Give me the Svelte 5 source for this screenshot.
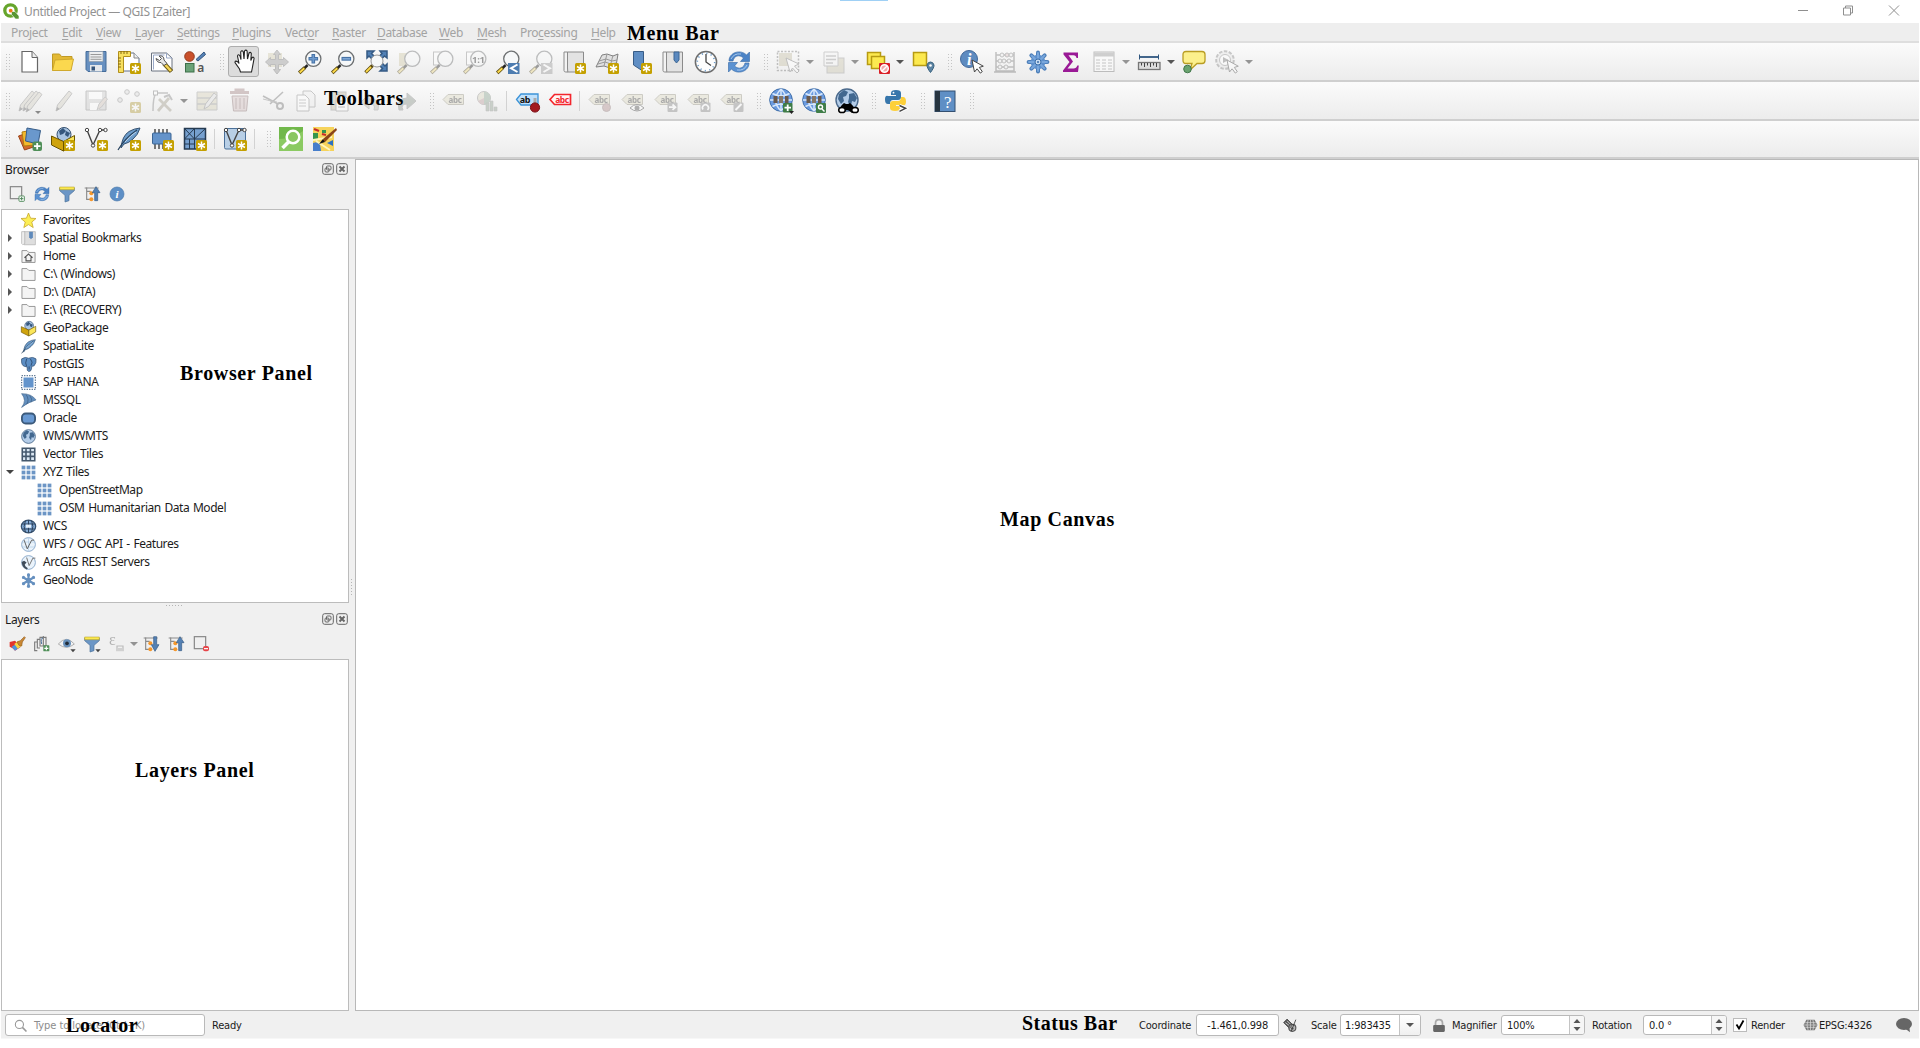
<script>
  // Shared artwork fragments, drawn on a 24x24 grid
  const badge = '<rect x="13" y="13" width="11" height="11" rx="1.500" fill="#c4a000"/><path d="M18.500 14.500v8M15 16.500l7 4M22 16.500l-7 4" stroke="#fff" stroke-width="1.500"/>';
  const stick = '<path d="M9.500 15.200l-3 3" stroke="#222" stroke-width="2.600"/><path d="M7 17.500l-5.800 5.300" stroke="#5a4a10" stroke-width="3.600"/><path d="M6.300 18.200l-4.600 4.200" stroke="#fcd94a" stroke-width="2"/>';
  const lens = stick + '<circle cx="15.300" cy="8.800" r="7.600" fill="#f6f8f9" stroke="#6d7072" stroke-width="1.300"/>';
  const cursor = '<path d="M12 10l2.500 12 2.600-3.200 3.200 4.300 2-1.500-3-4.200 4-1.200z" fill="#fff" stroke="#444" stroke-width="1"/>';
  const tag = '<path d="M1 10.500L6 5.500h15.500v10H6z" fill="#e0d9b4" stroke="#9a9478"/><text x="13" y="13.500" font-size="8" font-weight="700" text-anchor="middle" fill="#444">abc</text>';
  const greyBox = '<rect x="13.500" y="13.500" width="10" height="9.500" rx="1" fill="#888"/>';
  const globe = '<circle cx="12" cy="11" r="11.300" fill="#6b9be0" stroke="#3f6ea8"/><path d="M12 0v22M1 11h22M3.500 4.500q8.500 5 17 0M3.500 17.500q8.500-5 17 0M12 0q-11 11 0 22M12 0q11 11 0 22" fill="none" stroke="#d7e7fa" stroke-width="1.500"/><rect x="4.500" y="7" width="4" height="7" fill="#68594c"/><rect x="10" y="7" width="4" height="7" fill="#857768"/><rect x="16" y="7" width="3.500" height="7" fill="#68594c"/>';
  const earth = '<circle cx="12" cy="12" r="11" fill="#b3cce8" stroke="#4b6a8c" stroke-width="1.400"/><path d="M4 6l5-4 4 2-2 4-3 1 1 4-3 3-3-5zM14 6l5-1 3 5-2 4-3-1-1 5-3-4 1-4z" fill="#426890"/>';
  const pencil = '<path d="M5 22l1.500-6L18 2l3 2.500L10 19z" fill="#d5d0bd" stroke="#8c8c8c"/><path d="M5 22l1.200-4 2.500 2z" fill="#666"/>';
  const refresh = '<path d="M2 11C2 2 14-1 19.500 5L22.500 2v9.500h-9L16.500 8C12 4 7 6 6 11z" fill="#4b83c6" stroke="#3267a5" stroke-width=".6"/><path d="M22 13c0 9-12 12-17.500 6L1.500 22v-9.500h9L7.500 16c4.500 4 9.500 2 10.500-3z" fill="#5b92d2" stroke="#3267a5" stroke-width=".6"/><path d="M4 9Q7 3 14 4M20 15q-3 6-10 5" fill="none" stroke="#a8c8ec"/>';
  const book = '<path d="M5.500 2h16v20h-16z" fill="#e3e3e3" stroke="#8b8b8b"/><path d="M5.500 18V2H2v18.500q0 1.500 1.800 1.500h2z" fill="#f3f3f3" stroke="#8b8b8b"/>';
  const v = '<path d="M3 3l6 15L16 3h5" fill="none" stroke="#444" stroke-width="1.400"/><circle cx="3" cy="3" r="1.700" fill="#fff" stroke="#444"/><circle cx="16" cy="3" r="1.700" fill="#fff" stroke="#444"/><circle cx="21.500" cy="3" r="1.700" fill="#fff" stroke="#444"/><circle cx="9" cy="18.500" r="1.700" fill="#fff" stroke="#444"/>';
  const feather = '<path d="M4 21Q5 9 12 4.500 17 1.500 23 1 21 8 16 12 12 16 7 17z" fill="#6c9ccb" stroke="#33506f"/><path d="M1 23Q8 11 20 3" fill="none" stroke="#27425e" stroke-width="1.200"/><path d="M8 15q6-7 11-10" stroke="#bdd6ee" fill="none"/>';
  const box = '<circle cx="13" cy="7.500" r="7" fill="#a9c4e2" stroke="#35506e"/><path d="M8 4l4-3 3 3-3 3-3 1zM15 4l4 2-2 4-3-2z" fill="#35577e"/><path d="M.5 9l12 5.500v9.500L.5 18z" fill="#cfa30c" stroke="#6b5400"/><path d="M12.500 14.500L23.500 8.500v9L12.500 24z" fill="#fbe65a" stroke="#6b5400"/>';
  const funnel = '<path d="M1 3h22v4l-8 7v8l-6 2V14L1 7z" fill="#6b96c6" stroke="#4a6f99"/><path d="M1 1.500h22v4H1z" fill="#fce94f" stroke="#b39b20" stroke-width=".8"/>';
  const tree = '<path d="M4 2v18h6M4 8h6M1 3h21" fill="none" stroke="#8a8a8a" stroke-width="1.700"/><circle cx="11" cy="11" r="3" fill="#f5972b"/><circle cx="11" cy="20" r="3" fill="#f5972b"/>';
  const xyz = [1, 9, 17].flatMap((y) => [1, 9, 17].map((x) => `<rect x="${x}" y="${y}" width="6" height="6" fill="#6c95c5"/>`)).join('');
  const gear = Array.from({ length: 8 }, (_, i) => `<path d="M12 12V2.600" transform="rotate(${i * 45} 12 12)" stroke="#4d7fb9" stroke-width="4" stroke-linecap="round"/>`).join('')
    + '<circle cx="12" cy="12" r="7.300" fill="#5e90cc"/>'
    + Array.from({ length: 8 }, (_, i) => `<path d="M12 8V3" transform="rotate(${i * 45} 12 12)" stroke="#79a7dc" stroke-width="2" stroke-linecap="round"/>`).join('')
    + '<circle cx="12" cy="12" r="3" fill="#c8dcf2" stroke="#3b6ea8"/><circle cx="12" cy="12" r="1" fill="#3b6ea8"/>';
  const folder = '<path d="M1.500 21.500v-19h8l3 3h10v16z" fill="#f4f4f4" stroke="#939393" stroke-width="1.500"/>';
  const info = '<circle cx="12" cy="12" r="10.500" fill="#5d8fc6" stroke="#4a78ab"/><text x="12" y="18" font-size="17" font-style="italic" font-weight="700" text-anchor="middle" fill="#fff" font-family="Liberation Serif, serif">i</text>';
  const arrowDown = '<path d="M17 20h8l-4 4.500z" fill="#444"/>';

  const icons = {
    new: '<path d="M4 1.500h10l5.500 6V22H4z" fill="#fff" stroke="#666" stroke-width="1.200"/><path d="M14 1.500v6h5.500" fill="#eee" stroke="#666"/>',
    open: '<path d="M1.500 20.500V4h7l2 2.500H21V12" fill="#e3b935" stroke="#c09a25"/><path d="M1.500 20.500L4 10l18.500-1-2.500 11.500z" fill="#fbd84e" stroke="#d0a92d"/>',
    save: '<path d="M2 1.500h20v20H4l-2-2z" fill="#6790c0" stroke="#456c99"/><path d="M5 1.500h14v10H5z" fill="#eceeef" stroke="#8f9ba8" stroke-width=".7"/><path d="M6.500 4.500h11M6.500 7h11M6.500 9.300h11" stroke="#999"/><rect x="6" y="15" width="12" height="6.500" fill="#e5e8eb"/><rect x="7.500" y="16.500" width="3.500" height="4" fill="#34547a"/>',
    layout: '<path d="M5 3h12l5 5v13H5z" fill="#fff" stroke="#5e6f88"/><path d="M17 3v5h5" fill="#eee" stroke="#888"/><path d="M1.500 1.500h12v5h-7v16h-5z" fill="#f7df5f" stroke="#b18f1b"/><path d="M4 1v3M7 1v3M10 1v3M1 8h3M1 11h3M1 14h3M1 17h3" stroke="#866a12"/>' + badge,
    manager: '<path d="M1.500 3h15l5.500 5v13H1.500z" fill="#fff" stroke="#6a7380"/><path d="M16.500 3v5H22M3.500 19.500V5h11" fill="none" stroke="#9aa9c8"/><path d="M14 13.500l7.500 8" stroke="#6d5a16" stroke-width="4.500"/><path d="M15 14.500l6 6.500" stroke="#f5d555" stroke-width="2.500"/><path d="M9 6q5-1 5 4l3 3.500-3 2-3-3q-4 .5-5-4l3.500 2 2-2z" fill="#e8e8e8" stroke="#555"/>',
    style: '<circle cx="6.500" cy="6.500" r="4.800" fill="#c9502b" stroke="#93391d"/><path d="M13 9.500l8-7.500 1.500 2.500L15 11z" fill="#5682b6" stroke="#34567f"/><rect x="2.500" y="13.500" width="8.500" height="8.500" fill="#6aa278" stroke="#3c7049"/><text x="17.500" y="21.500" font-size="12" font-weight="600" text-anchor="middle" fill="#555">a</text>',
    hand: '<path d="M8.500 22l-1-3L3 12.500q0-2.500 3-.5l1 1.500L5.500 6q.5-2.500 2.500 0l1 3.500L8.700 2q1.300-2.400 2.600 0l.7 7 .5-8q1.500-1.700 2.600 0l.4 8 1.500-6q1.500-1.500 2.300.5l-.5 7 1.300-3q1.500-1 2 .8L20.500 17l-1 5z" fill="#fff" stroke="#222" stroke-width="1.100"/>',
    pansel: '<rect x="3" y="3" width="14" height="14" fill="#d8ce9c"/><path d="M12 0l3.500 4.500h-2v5h5v-2L23.500 12l-5 4.500v-2h-5v5h2L12 24l-3.500-4.500h2v-5h-5v2L.5 12l5-4.500v2h5v-5h-2z" fill="#999" stroke="#777"/>',
    zin: lens + '<path d="M15.300 4v9.600M10.500 8.800h9.600" stroke="#4773a6" stroke-width="3.600"/><path d="M15.300 5v7.600M11.500 8.800h7.600" stroke="#6f9bce" stroke-width="1.600"/>',
    zout: lens + '<path d="M10.500 8.800h9.600" stroke="#4773a6" stroke-width="3.800"/><path d="M11.500 8.800h7.600" stroke="#7ea7d5" stroke-width="1.600"/>',
    zfull: '<path d="M3 1h7L7.500 3.500l4 4-2.500 2.500-4-4L3 8zM23 1v7l-2.500-2-4 4L14 7.500l4-4L16 1zM23 21h-7l2.500-2.500-4-4L17 12l4 4 2-2z" fill="#5180b5" stroke="#355a84" stroke-width="1.500"/><circle cx="13" cy="11" r="6" fill="#f6f8f9" stroke="#999"/><path d="M8.500 15.500L1.500 22.500" stroke="#5a4a10" stroke-width="3.400"/><path d="M7 17l-5 5" stroke="#fcd94a" stroke-width="1.800"/>',
    zsel: '<rect x="2" y="3" width="13" height="13" fill="#d5ca92"/>' + lens,
    zlayer: '<rect x="3.500" y="2" width="14" height="13" fill="#fff" stroke="#888"/>' + lens,
    znative: '<rect x="3.500" y="2" width="14" height="13" fill="#fff" stroke="#888"/>' + lens + '<text x="15.300" y="12.500" font-size="9.500" font-weight="700" text-anchor="middle" fill="#222">1:1</text>',
    zlast: lens + '<rect x="12" y="13" width="11.500" height="11" fill="#4d7cb0"/><path d="M21.500 14.500L15 18.300l6.500 3.700" fill="none" stroke="#fff" stroke-width="2"/>',
    znext: lens + '<rect x="12" y="13" width="11.500" height="11" fill="#999"/><path d="M14.500 14.500l6.500 3.800-6.500 3.700" fill="none" stroke="#fff" stroke-width="2"/>',
    mapview: book + badge,
    view3d: '<path d="M1 17L7 5l5-1 6 2 5-2-2 12-6 2-6-2z" fill="#e0e0e0" stroke="#808080"/><path d="M4 11l7-2 6 2 5-1M9 16l3-12M15 17l3-12M3 14l7-2 6 2 5-1" fill="none" stroke="#999"/>' + badge,
    bookmark: '<path d="M5.500 1.500h10v20L5.500 15z" fill="#5f8ec4" stroke="#385c86"/>' + badge,
    bookmarks: book + '<path d="M13 2h5v8l-2.500 3L13 10z" fill="#5b89bf" stroke="#3c6795"/>',
    clock: '<circle cx="12" cy="12" r="10.600" fill="#fdfdfd" stroke="#6d6d6d" stroke-width="1.500"/><circle cx="12" cy="12" r="8.700" fill="none" stroke="#6d9bc8" stroke-width="1.600" stroke-dasharray="1.200 3.355"/><path d="M12 4v8l5 3.500" fill="none" stroke="#444" stroke-width="1.300"/>',
    refresh,
    select: '<path d="M1.500 1.500h21v19h-21z" fill="none" stroke="#777" stroke-width="1.500" stroke-dasharray="2 1.500"/><rect x="3" y="3" width="13" height="13" fill="#c9bf96"/><path d="M10 8l4 14 2.500-4 4.500 5 2-2-4.500-5 4.500-2z" fill="#fff" stroke="#777"/>',
    selform: '<rect x="6" y="8" width="17" height="15" fill="#d0c7a2" stroke="#999"/><path d="M3 2h14v14H3z" fill="#f5f5f5" stroke="#999"/><path d="M5 6h10M5 9.500h10M5 13h7" stroke="#999" stroke-width="1.500"/>',
    deselect: '<rect x="1.500" y="2.500" width="13" height="12" fill="#fce94f" stroke="#b79b12" stroke-width="1.500"/><rect x="5.500" y="6.500" width="13" height="12" fill="#fce94f" stroke="#b79b12" stroke-width="1.500"/><rect x="13" y="13" width="11" height="11" rx="1" fill="#da2027"/><circle cx="18.500" cy="18.500" r="3.800" fill="#f3a9a9" stroke="#fff" stroke-width="1.500"/><path d="M16 21l5-5" stroke="#fff" stroke-width="1.500"/>',
    selloc: '<rect x="2.500" y="2.500" width="13" height="13" fill="#fce94f" stroke="#b79b12" stroke-width="1.500"/><path d="M19.500 22.500q-3.800-5-3.500-7.500.8-3 3.500-3t3.500 3q.3 2.500-3.500 7.500z" fill="#5b84a3" stroke="#39627f"/><circle cx="19.500" cy="15.500" r="1.300" fill="#fff"/>',
    identify: '<circle cx="9" cy="9" r="8.500" fill="#5d8bc0" stroke="#42699a"/><text x="9" y="14.500" font-size="16" font-style="italic" font-weight="700" text-anchor="middle" fill="#fff" font-family="Liberation Serif, serif">i</text>' + cursor,
    abacus: '<path d="M3 2v19h18V2M3 5h18M3 11h18M3 17h18M1 22h22" fill="none" stroke="#777" stroke-width="1.500"/><g fill="#eee" stroke="#777"><circle cx="9" cy="5" r="2"/><circle cx="14" cy="5" r="2" fill="#e7bcbc"/><circle cx="18" cy="5" r="2"/><circle cx="7" cy="11" r="2"/><circle cx="11" cy="11" r="2"/><circle cx="16" cy="11" r="2"/><circle cx="7" cy="17" r="2"/><circle cx="13" cy="17" r="2"/></g>',
    gear,
    sigma: '<path d="M4.500 2.500h14.500V8h-1.500q-.5-2.800-3-2.800H9.500L14 11.500 8.500 18.500h6q3 0 3.800-3h1.500L19 22H4v-1.500l6.500-8.500L4.500 4.500z" fill="#9a1a96"/>',
    table: '<rect x="2" y="2" width="20" height="19.500" fill="#fff" stroke="#777"/><path d="M2 4.500h20" stroke="#999" stroke-width="4"/><path d="M4 10h4M4 13h4M4 16h4M4 19h4M10 10h4M10 13h4M10 16h4M10 19h4M16 10h4M16 13h4M16 16h4M16 19h4" stroke="#888" stroke-width="1.200"/>',
    ruler: '<path d="M2.500 7h19" stroke="#2f567f" stroke-width="1.800"/><path d="M2.500 4.500v5M21.500 4.500v5" stroke="#2f567f"/><rect x="1.500" y="12.500" width="21.500" height="7" fill="#ddd" stroke="#777" stroke-width="1.300"/><path d="M4.500 13v2.500M7.500 13v4M10.500 13v2.500M13.500 13v4M16.500 13v2.500M19.500 13v4" stroke="#444"/>',
    tips: '<path d="M4 1.500h16q3 0 3 3v6q0 3-3 3h-5L8 20l2-6.500H4q-3 0-3-3v-6q0-3 3-3z" fill="#fcf08c" stroke="#b99d24" stroke-width="1.300"/><circle cx="5.500" cy="19" r="3.800" fill="#69a36f" stroke="#41764a"/>',
    action: '<circle cx="10" cy="10" r="8.800" fill="#e5e5e5" stroke="#888" stroke-width="2" stroke-dasharray="3.500 1.500"/><circle cx="10" cy="10" r="5.500" fill="#fff" stroke="#888"/><path d="M8 7l5.500 3L8 13z" fill="#777"/>' + cursor,

    edits: '<g transform="translate(-4 0)">' + pencil + '</g>' + pencil + '<g transform="translate(3 1)">' + pencil + '</g><path d="M17 22h6l-3 3z" fill="#000"/>',
    pencil,
    saveedit: '<path d="M2 2h20v19H2z" fill="#ccc" stroke="#888"/><rect x="5" y="3" width="13" height="7" fill="#fff"/><rect x="6" y="14" width="9" height="7" fill="#fff"/><path d="M13 21l2-6 6-7 2.500 2-6 8z" fill="#d9c4b4" stroke="#999"/>',
    points: '<g fill="#ddd" stroke="#888"><circle cx="3" cy="11" r="2.300"/><circle cx="10" cy="3" r="2.300"/><circle cx="20" cy="5" r="2.300"/></g>' + badge,
    vertex: '<path d="M3 22Q3 8 6 4h12" fill="none" stroke="#888" stroke-width="1.500"/><rect x="3.500" y="2" width="4" height="4" fill="#fff" stroke="#777"/><path d="M8 22L19 9M9 10l12 12" stroke="#a69e83" stroke-width="2.800"/><path d="M14 8l5-2 3 5" fill="none" stroke="#888" stroke-width="2"/>',
    attrs: '<path d="M2 3h20v6H2zM2 9h20v6H2zM2 15h20v6H2z" fill="#d8d1a8" stroke="#999"/><path d="M9 20l1.500-5L19 4l3 2.500-8.500 11z" fill="#ddd" stroke="#888"/>',
    trash: '<path d="M2 3.500h19M8 3V1h7v2" stroke="#b28080" stroke-width="3" fill="none"/><path d="M4 7h16l-1.500 15h-13z" fill="#ddbcbc" stroke="#997070"/><path d="M8 9v11M12 9v11M16 9v11" stroke="#997070"/>',
    cut: '<path d="M2 7l15 8M22 3L9 15" stroke="#777" stroke-width="1.600"/><circle cx="19" cy="17" r="3" fill="none" stroke="#777" stroke-width="2"/><path d="M9 12l7 1M2 10l12 3" stroke="#888" fill="none"/>',
    copy: '<path d="M9 2h8l4 4v12H9z" fill="#eee" stroke="#888"/><path d="M3 6h8l4 4v12H3z" fill="#fff" stroke="#888"/><path d="M5 11h7M5 14h7M5 17h7" stroke="#999"/>',
    paste: '<rect x="4" y="3" width="15" height="18" fill="#cbbb8c" stroke="#888"/><path d="M9 6h8l4 4v12H9z" fill="#fff" stroke="#888"/><path d="M11 12h7M11 15h7M11 18h7" stroke="#777"/>',
    undo: '<path d="M18 21q3-12-9-11V5l-8 8 8 7v-5q7-1 5 6z" fill="#bba" stroke="#999"/>',
    redo: '<path d="M6 21Q3 9 14 9V4l9 8-9 8v-5q-7 0-4 6z" fill="#898" stroke="#888"/>',
    label: tag,
    diagram: '<circle cx="9" cy="9" r="6.500" fill="#ddd5b0" stroke="#888"/><path d="M9 9V2.500A6.500 6.500 0 019 15.500z" fill="#7fa987"/><path d="M9 9L3 12a6.500 6.500 0 006 3.500z" fill="#c99"/><path d="M11 14h3v8h-3zM15 12h3v10h-3zM19 18h3v4h-3z" fill="#8aa58a" stroke="#888" stroke-width=".6"/>',
    abpin: '<path d="M1.500 10.500L6 5h17v11H6z" fill="#bfe0fb" stroke="#3c93d8" stroke-width="1.300"/><text x="10" y="14" font-size="9" font-weight="700" text-anchor="middle" fill="#111">ab</text><path d="M20 17V9" stroke="#aaa" stroke-width="3"/><circle cx="20" cy="18.500" r="4.600" fill="#a31a20" stroke="#7c1016"/>',
    abcred: '<path d="M2 10.500L6.500 5.500h16v10h-16z" fill="#fff5f5" stroke="#f3262d" stroke-width="1.700"/><text x="14" y="13.500" font-size="8.500" font-weight="700" text-anchor="middle" fill="#f3262d">abc</text>',
    labpin: tag + '<circle cx="18.500" cy="18.500" r="4" fill="#c58b8b" stroke="#977"/>',
    labeye: tag + '<path d="M9 19q7-7 14 0-7 6-14 0z" fill="#fff" stroke="#444"/><circle cx="16" cy="19" r="2.500" fill="#555"/>',
    labmove: tag + greyBox + '<path d="M15 18.200h6M18.500 15.500l3 2.700-3 2.700" stroke="#fff" stroke-width="1.700" fill="none"/>',
    labrot: tag + greyBox + '<path d="M16 20.500a3 3 0 114.500.500" stroke="#fff" stroke-width="1.600" fill="none"/>',
    labedit: tag + greyBox + '<path d="M15.500 21l6-6" stroke="#fff" stroke-width="2"/>',
    webadd: globe + '<rect x="14" y="14" width="9.500" height="9.500" rx="1" fill="#3f7d48"/><path d="M18.700 15.500v6.500M15.500 18.700H22" stroke="#fff" stroke-width="1.800"/><path d="M20 22h5l-2.500 3z" fill="#222"/>',
    websearch: globe + '<rect x="14" y="14" width="10" height="10" rx="1" fill="#3f7d48"/><circle cx="18.500" cy="18" r="2" fill="none" stroke="#fff" stroke-width="1.400"/><path d="M20 20l2.500 2.500" stroke="#fff" stroke-width="1.400"/>',
    binoc: '<g transform="translate(0 -1)">' + earth + '</g><path d="M4 23q0-5 5-9l2 1h2l2-1q5 4 6 9l-4 1-4-3h-3l-3 3z" fill="#000"/><ellipse cx="7" cy="21" rx="3.300" ry="2.600" fill="#fff" stroke="#000" stroke-width="1.500"/><ellipse cx="20" cy="21" rx="3.300" ry="2.600" fill="#fff" stroke="#000" stroke-width="1.500"/>',
    python: '<path d="M7 7V4q0-3 5-3t5 3v4q0 3-3 3H9q-3 0-3 4H4q-3 0-3-4.500T4 7h8V6H7z" fill="#3776ab"/><path d="M16 16v3q0 3-5 3t-5-3v-4q0-3 3-3h5q3 0 3-4h2q3 0 3 4.500T19 16h-7v1h4z" fill="#fdd03a"/><circle cx="9.500" cy="3.700" r=".9" fill="#fff"/><path d="M15.500 16.500l6 2.800-6 3" stroke="#fff" stroke-width="3.500" fill="none"/><path d="M15.500 16.500l6 2.800-6 3" stroke="#444" stroke-width="1.500" fill="none"/>',
    help: '<rect x="2" y="2" width="20" height="20.500" fill="#5f8fc5" stroke="#334f70"/><path d="M2 2h5v20.500H2z" fill="#263440"/><text x="14.500" y="18.500" font-size="17" text-anchor="middle" fill="#fff" font-family="Liberation Serif, serif">?</text>',

    sources: '<path d="M.5 9l9-3 6 14-9 3z" fill="#d3682d" stroke="#9a4317"/><path d="M4 5l11-2 2 15-11 1z" fill="#f4b92c" stroke="#b17d12"/><path d="M9 1l13.500 2.500L20 17 7.500 14z" fill="#6a98cc" stroke="#365c88"/><rect x="14.500" y="14.500" width="9.500" height="9.500" rx="2" fill="#4f8f58"/><path d="M19.200 16v6.500M16 19.200h6.500" stroke="#fff" stroke-width="1.800"/>',
    gpkg: box + badge,
    shp: v + badge,
    spatialite: feather + badge,
    memory: '<path d="M5 2v20M9 2v20M13 2v20M17 2v20" stroke="#333" stroke-width="1.300"/><rect x="2.500" y="6" width="18.500" height="11" rx="1" fill="#6493ca" stroke="#3b6594"/>' + badge,
    mesh: '<rect x="1.500" y="1.500" width="21" height="20.500" fill="#76a0cf" stroke="#263b52" stroke-width="1.500"/><path d="M11.500 1.500V22M1.500 12h21M1.500 1.500l10 10.500M11.500 1.500l-10 10.500M11.500 12l11-10.500M1.500 17h10M6.500 12v10" stroke="#263b52"/>' + badge,
    virtual: '<rect x="1.500" y="1.500" width="21" height="20.500" rx="1.500" fill="#b8cfe6" stroke="#4b7099"/>' + v + badge,
    search: '<rect x="0" y="0" width="24" height="24" fill="#71b84b"/><path d="M0 24V12q14 0 24-8v20z" fill="#8bca62"/><circle cx="14" cy="10" r="6.300" fill="#8ac762" stroke="#fff" stroke-width="2.500"/><path d="M9.500 15L3.500 21" stroke="#fff" stroke-width="3.500"/>',
    osm: '<rect x="1" y="0" width="21" height="24" fill="#f6d35b"/><path d="M1 6h5v6H1zM10 3h4v3h-4z" fill="#35954c"/><path d="M1 16q6-2 7 2t1 6H1z" fill="#477ecb"/><path d="M15 16l6-3v6z" fill="#2c71c3"/><path d="M2 2l5 2M10 7l4 1" stroke="#c42b2b" stroke-width="2.200"/><path d="M4 14l14 9M1 13L20 10" stroke="#fff6bb" stroke-width="2"/><path d="M24 1L11 12l2 3L25 3z" fill="#8b4519"/><path d="M11 12l-4 5 6-2z" fill="#111"/>',

    addsel: '<rect x="2" y="1" width="17" height="18" fill="none" stroke="#888" stroke-width="1.800"/><rect x="15" y="15" width="8" height="8" rx="1" fill="#fff" stroke="#4d8958" stroke-width="1.400"/><path d="M19 16.500v5M16.500 19h5" stroke="#4d8958" stroke-width="1.500"/>',
    funnel,
    funneldrop: funnel + arrowDown,
    collapse: tree + '<path d="M16 22V10h-3.500L18 1l6 9h-3.500v12z" fill="#5481b4" stroke="#355a85"/>',
    expand: tree + '<path d="M16 1v12h-3.500l5.500 10 6-10h-3.500V1z" fill="#5481b4" stroke="#355a85"/>',
    info,
    brush: '<path d="M1 9l8-2 9 9-9 6q-2-4-8-6z" fill="#e2352d"/><path d="M4 16l10-6 4 5-9 7z" fill="#4d94df"/><path d="M8 12l6-5 6 7-7 5z" fill="#f7d342"/><path d="M12 9l5-2 6-6 1.500 1.500L20 9l-1 6-4-1z" fill="#c98733" stroke="#966023"/>',
    group: '<path d="M5 22H1V9h4M9 18H5V5h4M9 2h9v13H9zM14 0v15" fill="none" stroke="#7c7c7c" stroke-width="1.700"/><path d="M13.500 3q-4 0-2 9" fill="none" stroke="#4c739e" stroke-width="1.500"/><rect x="14" y="14" width="9" height="9" rx="1" fill="#4f8f58"/><path d="M18.500 15.500v6M15.500 18.500h6" stroke="#fff" stroke-width="1.700"/>',
    eye: '<path d="M-1 12Q11-2 23 12 11 22 -1 12z" fill="#f3f3f3" stroke="#a5a5a5" stroke-width="1.300"/><circle cx="12" cy="11" r="6" fill="#6790bb"/><circle cx="12" cy="11" r="2.800" fill="#222c38"/>' + arrowDown,
    epsilon: '<text x="0" y="14" font-size="24" fill="#888" font-family="Liberation Serif, serif">ε</text><path d="M12 23v-8h9v8M15 23v-5M18 23v-5" fill="none" stroke="#999" stroke-width="1.800"/>',
    remove: '<rect x="2" y="1" width="17" height="18" fill="none" stroke="#888" stroke-width="1.800"/><rect x="15" y="15" width="9" height="8" rx="3" fill="#e64549"/><path d="M16.500 19h6" stroke="#fff" stroke-width="1.800"/>',

    star: '<path d="M12 0l3.300 8.300 8.700.5-6.800 5.700 2.300 8.800L12 18.500l-7.500 4.800 2.300-8.800L0 8.800l8.700-.5z" fill="#fcee55" stroke="#c7a72b" stroke-width="1.300"/>',
    spatialbm: '<path d="M5 1h18v21H5z" fill="#dedede" stroke="#aaa"/><path d="M1 1h5v19l-3 2-2-2z" fill="#eee" stroke="#aaa"/><path d="M13 1h6v9l-3 3-3-3z" fill="#5f8abb"/>',
    home: folder + '<path d="M5.500 14L12 8l6.500 6M8 13v6h8v-6" fill="none" stroke="#555" stroke-width="1.700"/>',
    folder,
    box,
    feather,
    elephant: '<path d="M1 3Q7-1 12 2q7-3 12 1 1 6-3 11l-4 1v3q-1 6-5 5l-2-2v-5l-4-1Q0 14 1 3z" fill="#5c8ec4" stroke="#39587b" stroke-width="1.300"/><path d="M9 3q-3 7 0 12M15 3q5 5 1 11M13 15v5" fill="none" stroke="#2f4d70" stroke-width="1.500"/>',
    hana: '<rect x="4" y="4" width="16" height="16" fill="#6394cc"/><path d="M1 1h22v22H1z" fill="none" stroke="#54708e" stroke-width="2" stroke-dasharray="2 2"/>',
    mssql: '<path d="M1 1q16 0 23 10-5 2-10 4T1 23Q10 12 1 1z" fill="#638fbe" stroke="#41658b"/><path d="M8 2q6 9 1 16M14 4q5 6 2 11" fill="none" stroke="#37587d"/>',
    oracle: '<rect x="1.500" y="4" width="21" height="16" rx="6" fill="#6999d2" stroke="#3c5a7b" stroke-width="3"/>',
    earth,
    vtiles: '<path d="M2 2h20v20H2zM2 8h20M2 15h20M8 2v20M15 2v20" fill="#dbe8f4" stroke="#44586d" stroke-width="2.500"/>',
    xyz,
    wcs: '<ellipse cx="12" cy="12" rx="11.500" ry="10" fill="#83aad4" stroke="#35506e" stroke-width="2"/><path d="M12 2v20M2 8h20M2 16h20M7 3q-4 9 0 18M17 3q4 9 0 18" stroke="#2a3e57" stroke-width="1.500" fill="none"/><rect x="8" y="9" width="8" height="5" fill="#e6f1fb"/>',
    wfs: '<circle cx="12" cy="12" r="11" fill="#eaf3fb" stroke="#86a6c9" stroke-width="1.500"/><path d="M12 1v22M2 8h20M2 16h20" stroke="#abc7e3"/><path d="M5 5l5 14L17 5h4" stroke="#666" stroke-width="1.600" fill="none"/>',
    arcgis: '<circle cx="12" cy="12" r="11" fill="#eaf3fb" stroke="#86a6c9" stroke-width="1.500"/><path d="M9 4l4 13L19 5h4" stroke="#777" stroke-width="1.600" fill="none"/><path d="M1 11l4-2 4 3-3 3 1 3 4 3-2 2q-7-3-8-12z" fill="#404c59"/>',
    geonode: '<path d="M12 1v22M2.500 6.500l19 11M21.500 6.500l-19 11" stroke="#6690bf" stroke-width="3.500"/><circle cx="12" cy="12" r="4" fill="#6690bf"/><g fill="#6690bf"><circle cx="12" cy="3" r="2.500"/><circle cx="12" cy="21" r="2.500"/><circle cx="4" cy="7" r="2.500"/><circle cx="20" cy="17" r="2.500"/><circle cx="20" cy="7" r="2.500"/><circle cx="4" cy="17" r="2.500"/></g>',
    extents: '<path d="M1 7l6-6 9 9-6 6z" fill="#555" stroke="#222"/><path d="M4 7l9 7M7 4l8 8" stroke="#ddd" stroke-width="1.400"/><circle cx="16" cy="16" r="6" fill="#bbb" stroke="#555" stroke-width="2"/><path d="M11 17l6-7M14 22l8-20" stroke="#333" stroke-width="1.400"/><circle cx="16" cy="17" r="2" fill="#444"/>',
    lock: '<path d="M6 12V8q0-6 6-6t6 6v4" fill="none" stroke="#aaa" stroke-width="3"/><rect x="2" y="11" width="20" height="12" rx="2" fill="#666"/>',
    crs: '<path d="M5 3h14l5 9-5 9H5l-5-9z" fill="#777"/><path d="M12 3v18M0 12h24M3 8h18M3 16h18M8 3q-4 9 0 18M16 3q4 9 0 18" fill="none" stroke="#ddd" stroke-width="1.200"/>',
    bubble: '<ellipse cx="12" cy="10.500" rx="12" ry="9" fill="#666"/><path d="M13 17l8 6-1-8z" fill="#666"/>',
    loupe: '<circle cx="10" cy="10" r="7.500" fill="none" stroke="#999" stroke-width="2"/><path d="M15.500 15.500L23 23" stroke="#999" stroke-width="3"/>'
  };

  // Item syntax: "|" grip, "/" separator, "~name" disabled, "!name" pressed, "name>" with a drop arrow
  const toolbars = [
    '| new open save layout manager style | !hand ~pansel zin zout zfull ~zsel ~zlayer ~znative zlast ~znext mapview view3d bookmark bookmarks clock refresh | ~select> ~selform> deselect> selloc | identify ~abacus gear sigma ~table> ruler> tips ~action>',
    '| ~edits ~pencil ~saveedit ~points ~vertex> ~attrs ~trash ~cut ~copy ~paste ~undo ~redo | ~label ~diagram / abpin abcred / ~labpin ~labeye ~labmove ~labrot ~labedit | webadd websearch binoc | python | help |',
    '| sources gpkg shp spatialite memory mesh / virtual / | search osm'
  ].map((row) => row.split(' ').map((t) => ({
    kind: t === '|' ? 'grip' : t === '/' ? 'sep' : 'tool',
    off: t.startsWith('~'),
    on: t.startsWith('!'),
    drop: t.endsWith('>'),
    name: t.replace(/[~!>]/g, '')
  })));

  const menus = ['Pro_ject', '_Edit', '_View', '_Layer', '_Settings', '_Plugins', 'Vect_or', '_Raster', '_Database', '_Web', '_Mesh', 'Pro_cessing', '_Help']
    .map((m) => { const i = m.indexOf('_'); return [m.slice(0, i), m[i + 1], m.slice(i + 2)]; });

  const rows = [
    ['star', 'Favorites'], ['spatialbm', 'Spatial Bookmarks', 'shut'], ['home', 'Home', 'shut'],
    ['folder', 'C:\\ (Windows)', 'shut'], ['folder', 'D:\\ (DATA)', 'shut'], ['folder', 'E:\\ (RECOVERY)', 'shut'],
    ['box', 'GeoPackage'], ['feather', 'SpatiaLite'], ['elephant', 'PostGIS'], ['hana', 'SAP HANA'],
    ['mssql', 'MSSQL'], ['oracle', 'Oracle'], ['earth', 'WMS/WMTS'], ['vtiles', 'Vector Tiles'],
    ['xyz', 'XYZ Tiles', 'opened'], ['xyz', 'OpenStreetMap', 'child'], ['xyz', 'OSM Humanitarian Data Model', 'child'],
    ['wcs', 'WCS'], ['wfs', 'WFS / OGC API - Features'], ['arcgis', 'ArcGIS REST Servers'], ['geonode', 'GeoNode']
  ];
</script>

{#snippet icon(name, cls)}
  <svg class={cls} viewBox="0 0 24 24" fill="none">{@html icons[name]}</svg>
{/snippet}

{#snippet dockTitle(title)}
  <div class="dock-title">
    <span>{title}</span>
    <svg viewBox="0 0 12 12"><rect x=".7" y=".7" width="10.600" height="10.600" rx="2" /><rect x="4.500" y="3" width="4.500" height="4" rx="1" /><rect x="3" y="5" width="4" height="4" rx="1" /></svg>
    <svg viewBox="0 0 12 12"><rect x=".7" y=".7" width="10.600" height="10.600" rx="2" /><path d="M3.500 3.500l5 5M8.500 3.500l-5 5" stroke-width="2" /></svg>
  </div>
{/snippet}

{#snippet spin(value)}
  <div class="field spin">
    <span>{value}</span>
    <svg viewBox="0 0 14 20"><path d="M3.500 8h7L7 4zM3.500 12h7L7 16z" /></svg>
  </div>
{/snippet}

<div class="app">
  <header class="titlebar">
    <svg class="logo" viewBox="0 0 16 16"><circle cx="7.500" cy="7.500" r="5.700" fill="none" stroke="#66a52b" stroke-width="3.300" /><path d="M8.500 8.500h3.500l4 4.500v3h-3.500l-4-4.500z" fill="#589632" stroke="#fff" stroke-width=".6" /><circle cx="7.700" cy="7.700" r="1.900" fill="#ee7913" /></svg>
    <span class="caption">Untitled Project — QGIS [Zaiter]</span>
    <svg class="winbtns" viewBox="0 0 104 14"><path d="M2 7.500h10M47.500 5h7v7h-7zM49.500 5V3h7v7h-2M93 2.500l10 10M103 2.500l-10 10" /></svg>
    <i class="snap"></i>
  </header>

  <nav class="menubar">
    {#each menus as [a, key, b]}<span>{a}<u>{key}</u>{b}</span>{/each}
  </nav>

  {#each toolbars as bar}
    <div class="toolbar">
      {#each bar as item}
        {#if item.kind === 'grip'}
          <i class="grip"></i>
        {:else if item.kind === 'sep'}
          <i class="sep"></i>
        {:else}
          <div class="tool" class:on={item.on} class:off={item.off}>{@render icon(item.name, 'ico')}</div>
          {#if item.drop}<i class="drop" class:off={item.off}></i>{/if}
        {/if}
      {/each}
    </div>
  {/each}

  <main class="workspace">
    <aside class="docks">
      <section class="dock browser">
        {@render dockTitle('Browser')}
        <div class="dock-tools">
          {#each ['addsel', 'refresh', 'funnel', 'collapse', 'info'] as n}{@render icon(n, 'small')}{/each}
        </div>
        <div class="tree">
          {#each rows as [ic, text, state]}
            <div class="row {state ?? ''}"><i class="twist"></i>{@render icon(ic, 'node')}<span>{text}</span></div>
          {/each}
        </div>
      </section>
      <div class="splitter"><i></i></div>
      <section class="dock layers">
        {@render dockTitle('Layers')}
        <div class="dock-tools">
          {#each ['brush', 'group', 'eye', 'funneldrop', 'epsilon'] as n}{@render icon(n, n === 'epsilon' ? 'small dim' : 'small')}{/each}
          <i class="drop off"></i>
          {#each ['expand', 'collapse', 'remove'] as n}{@render icon(n, 'small')}{/each}
        </div>
        <div class="tree"></div>
      </section>
    </aside>
    <div class="vsplit"><i></i></div>
    <div class="canvas"></div>
  </main>

  <footer class="statusbar">
    <div class="field locator">{@render icon('loupe', 'loupe')}<span>Type to locate (Ctrl+K)</span></div>
    <span>Ready</span>
    <span>Coordinate</span>
    <div class="field center">-1.461,0.998</div>
    {@render icon('extents', 'st')}
    <span>Scale</span>
    <div class="field combo"><span>1:983435</span><b><i class="drop"></i></b></div>
    {@render icon('lock', 'st')}
    <span>Magnifier</span>
    {@render spin('100%')}
    <span>Rotation</span>
    {@render spin('0.0 °')}
    <svg class="check" viewBox="0 0 14 14"><rect x=".5" y=".5" width="13" height="13" fill="#fff" stroke="#bbb" /><path d="M3.500 6.500l2.500 4L10.500 2.500" fill="none" stroke="#000" stroke-width="1.800" /></svg>
    <span>Render</span>
    {@render icon('crs', 'crs')}
    <span>EPSG:4326</span>
    {@render icon('bubble', 'bubble')}
  </footer>

  <b class="note menu">Menu Bar</b>
  <b class="note tools">Toolbars</b>
  <b class="note brow">Browser Panel</b>
  <b class="note map">Map Canvas</b>
  <b class="note lay">Layers Panel</b>
  <b class="note loc">Locator</b>
  <b class="note stat">Status Bar</b>
</div>

<style>
  :global(body) { background: #fff; overflow: hidden; }
  .app { position: relative; width: 1920px; height: 1048px; display: flex; flex-direction: column; box-sizing: border-box; font: 12px/18px "Noto Sans", "Open Sans", sans-serif; letter-spacing: -0.38px; color: #1b1b1b; }
  .app * { box-sizing: border-box; }
  svg { flex: none; overflow: visible; }
  .titlebar { position: relative; height: 23px; flex: none; display: flex; align-items: center; padding: 0 20px 0 3px; color: #929292; }
  .logo { width: 16px; height: 16px; margin-bottom: 2px; }
  .caption { margin-left: 5px; flex: 1; }
  .winbtns { width: 104px; height: 14px; margin-bottom: 3px; fill: none; stroke: #8f8f8f; }
  .snap { position: absolute; left: 840px; top: 0; width: 48px; height: 1px; background: #9fd0f5; }
  .menubar { height: 20px; flex: none; margin: 0 1px; padding-left: 10px; display: grid; grid-template-columns: 51px 34px 39px 42px 55px 53px 47px 45px 62px 38px 43px 71px 40px; background: #eee; border-bottom: 2px solid #dedede; color: #a3a3a3; white-space: nowrap; line-height: 19px; }
  u { text-underline-offset: 2px; }
  .toolbar { height: 39px; flex: none; margin: 0 1px; display: flex; align-items: center; background: linear-gradient(#fbfbfb, #ececec); border-bottom: 2px solid #cfcfcf; }
  .toolbar:nth-of-type(3) { height: 38px; }
  .grip { width: 16px; height: 18px; flex: none; background: radial-gradient(circle, #c4c4c4 .8px, transparent 1px) 8px 0 / 3px 3px; background-clip: content-box; padding: 0 3px 0 8px; }
  .grip:first-child { margin-left: -4px; }
  .sep { width: 7px; height: 20px; flex: none; background: linear-gradient(#d2d2d2, #d2d2d2) 3px 0 / 1px 100% no-repeat; }
  .tool { width: 33px; height: 31px; flex: none; display: grid; place-items: center; }
  .tool.on { background: #dcdcdc; border: 1px solid #adadad; border-radius: 3px; width: 31px; margin: 0 1px; }
  .tool.off { opacity: .42; filter: grayscale(.4); }
  .ico { width: 24px; height: 24px; display: block; }
  .drop { width: 12px; flex: none; display: grid; place-items: center; }
  .drop::after { content: ''; border: 4px solid transparent; border-top-color: #555; border-bottom: 0; }
  .drop.off { opacity: .6; }

  .workspace { flex: none; height: 852px; display: flex; background: #f0f0f0; margin: 0 1px; }
  .docks { width: 348px; display: flex; flex-direction: column; }
  .dock { display: flex; flex-direction: column; }
  .browser { height: 444px; }
  .layers { flex: 1; }
  .dock-title { height: 21px; display: flex; align-items: center; gap: 2px; padding: 0 1px 0 4px; }
  .dock-title span { flex: 1; }
  .dock-title svg { width: 12px; height: 12px; margin-top: -2px; fill: none; stroke: #666; }
  .dock-tools { height: 29px; display: flex; align-items: center; gap: 9px; padding: 0 0 1px 8px; }
  .dock-tools .drop { margin: 0 -6px 0 -6px; }
  .small { width: 16px; height: 16px; }
  .dim { opacity: .6; }
  .tree { flex: 1; background: #fff; border: 1px solid #bcbcbc; padding-top: 1px; }
  .row { height: 18px; display: flex; align-items: center; white-space: nowrap; letter-spacing: -0.45px; word-spacing: 1px; }
  .row.child { padding-left: 16px; }
  .node { width: 15px; height: 15px; margin-right: 7px; }
  .twist { width: 19px; height: 8px; flex: none; display: grid; place-items: center; }
  .shut .twist::after { content: ''; border: 4px solid transparent; border-left-color: #555; border-right: 0; margin-right: 4px; }
  .opened .twist::after { content: ''; border: 4px solid transparent; border-top-color: #444; border-bottom: 0; margin-right: 3px; }
  .splitter { height: 6px; display: grid; place-items: center; padding-bottom: 2px; }
  .splitter i { width: 18px; height: 1px; background: repeating-linear-gradient(90deg, #b5b5b5 0 1px, transparent 1px 3px); }
  .vsplit { width: 6px; padding: 420px 0 0 2px; }
  .vsplit i { display: block; width: 1px; height: 18px; background: repeating-linear-gradient(#b5b5b5 0 1px, transparent 1px 3px); }
  .canvas { flex: 1; background: #fff; border: 1px solid #b8b8b8; }

  .statusbar { height: 28px; flex: none; margin: 0 1px; padding: 1px 4px 0; display: grid; grid-template-columns: 207px 927px 57px 87px 28px 29px 92px 20px 49px 91px 51px 90px 18px 52px 16px 77px 17px; align-items: center; background: #f0f0f0; border-bottom: 1px solid #f7f7f7; font: 11px/16px "DejaVu Sans Condensed", "DejaVu Sans", sans-serif; font-stretch: condensed; letter-spacing: -0.2px; white-space: nowrap; }
  .statusbar > span { padding-top: 1px; }
  .field { height: 22px; background: #fff; border: 1px solid #b9b9b9; border-radius: 3px; display: flex; align-items: center; overflow: hidden; }
  .field > span { padding-top: 1px; }
  .locator { width: 200px; color: #8d8d8d; padding-left: 8px; gap: 7px; letter-spacing: -0.05px; }
  .loupe { width: 13px; height: 13px; }
  .center { width: 83px; justify-content: center; padding-top: 1px; }
  .combo { width: 81px; padding-left: 4px; }
  .combo span { flex: 1; }
  .combo b { width: 21px; height: 20px; border-left: 1px solid #c4c4c4; background: linear-gradient(#fff, #f0f0f0); display: grid; place-items: center; }
  .spin { width: 84px; height: 20px; padding-left: 5px; }
  .spin span { flex: 1; }
  .spin svg { width: 15px; height: 20px; border-left: 1px solid #c4c4c4; background: #f6f6f6; fill: #555; }
  .st { width: 14px; height: 15px; }
  .check { width: 14px; height: 14px; }
  .crs { width: 15px; height: 14px; }
  .bubble { width: 16px; height: 16px; }

  .note { position: absolute; font: 700 20px/24px "Liberation Serif", serif; letter-spacing: .65px; color: #000; white-space: nowrap; }
  .menu { left: 627px; top: 21px; }
  .tools { left: 324px; top: 86px; }
  .brow { left: 180px; top: 361px; }
  .map { left: 1000px; top: 507px; }
  .lay { left: 135px; top: 758px; }
  .loc { left: 66px; top: 1013px; }
  .stat { left: 1022px; top: 1011px; letter-spacing: .5px; }
</style>
